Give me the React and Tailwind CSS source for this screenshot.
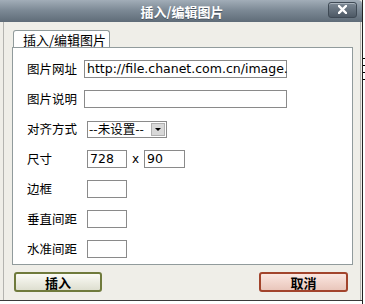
import React from "react";

const cjk = { fontFamily: '"Noto Sans CJK SC", "Noto Sans", sans-serif' };
const latin = { fontFamily: '"DejaVu Sans", "Noto Sans CJK SC", sans-serif' };

function Label({ children }) {
  return (
    <div className="w-[57px] text-[12.5px] leading-none text-black" style={cjk}>
      {children}
    </div>
  );
}

function Box({ className = "", children }) {
  return (
    <div
      className={`h-[18px] border border-[#8a8a8a] bg-white flex items-center px-[2px] text-[12.5px] text-black ${className}`}
      style={latin}
    >
      {children}
    </div>
  );
}

export default function App() {
  return (
    <div className="w-[365px] h-[304px] flex overflow-hidden bg-white">
      <div className="w-[362px] h-[301px] flex flex-col bg-[#efeee8] border-b border-[#3a3a3a]">
        {/* title bar */}
        <div className="h-[22px] grid grid-cols-[1fr_auto_1fr] items-center bg-gradient-to-b from-[#a2adb8] via-[#7a8793] to-[#5f6c78] rounded-tr-[4px]">
          <div />
          <div
            className="text-white font-bold text-[13px] leading-none pl-[2px] [text-shadow:0_1px_0_#4a5560]"
            style={cjk}
          >
            插入/编辑图片
          </div>
          <div className="flex justify-end pr-[5px]">
            <div className="w-[29px] h-[16px] mt-[-3px] rounded-[3px] border border-[#3f4a55] bg-gradient-to-b from-[#7d8995] to-[#4d5965] flex items-center justify-center shadow-[inset_0_1px_0_#aab4bd]">
              <svg width="9" height="9" viewBox="0 0 9 9">
                <path d="M1 1 L8 8 M8 1 L1 8" stroke="white" strokeWidth="2.4" strokeLinecap="square" />
              </svg>
            </div>
          </div>
        </div>
        {/* body */}
        <div className="flex-1 ml-[3px] mr-[1px] border-l border-r border-[#b4b4b0] flex flex-col">
          <div className="pl-[8px] pr-[8px] pt-[8px]">
            <div className="flex">
              <div
                className="w-[97px] h-[17px] ml-[1px] border border-b-0 border-[#919b9c] rounded-t-[3px] bg-white flex items-center pl-[9px] text-[13px] leading-none text-black"
                style={cjk}
              >
                插入/编辑图片
              </div>
            </div>
            <div className="w-[341px] h-[218px] border border-[#919b9c] bg-white pl-[14px] pt-[12px] flex flex-col">
              <div className="flex items-center h-[18px]">
                <Label>图片网址</Label>
                <Box className="w-[203px]">http://file.chanet.com.cn/image.</Box>
              </div>
              <div className="flex items-center h-[18px] mt-[12px]">
                <Label>图片说明</Label>
                <Box className="w-[203px]" />
              </div>
              <div className="flex items-center h-[18px] mt-[12px]">
                <Label>对齐方式</Label>
                <div className="ml-[3px] w-[80px] h-[17px] border border-[#8a8a8a] bg-white flex items-center">
                  <div className="flex-1 pl-[1px] text-[12.5px] leading-none text-black" style={cjk}>
                    --未设置--
                  </div>
                  <div className="w-[14px] h-[13px] mr-[1px] bg-[#d8d8d8] border border-[#b0b0b0] flex items-center justify-center">
                    <div className="w-0 h-0 border-l-[3px] border-r-[3px] border-t-[3px] border-l-transparent border-r-transparent border-t-black" />
                  </div>
                </div>
              </div>
              <div className="flex items-center h-[18px] mt-[12px]">
                <Label>尺寸</Label>
                <Box className="w-[40px] ml-[3px]">728</Box>
                <span className="w-[17px] text-center text-[12px] text-black" style={latin}>
                  x
                </span>
                <Box className="w-[41px]">90</Box>
              </div>
              <div className="flex items-center h-[18px] mt-[12px]">
                <Label>边框</Label>
                <Box className="w-[40px] ml-[3px]" />
              </div>
              <div className="flex items-center h-[18px] mt-[12px]">
                <Label>垂直间距</Label>
                <Box className="w-[40px] ml-[3px]" />
              </div>
              <div className="flex items-center h-[18px] mt-[12px]">
                <Label>水准间距</Label>
                <Box className="w-[40px] ml-[3px]" />
              </div>
            </div>
          </div>
          <div className="flex justify-between pl-[10px] pr-[12px] mt-[7px]">
            <div
              className="w-[88px] h-[20px] rounded-[3px] border-2 border-[#6f7a3c] bg-gradient-to-b from-[#fbfbf6] to-[#dedfd0] flex items-center justify-center text-[13px] font-bold leading-none text-black"
              style={cjk}
            >
              插入
            </div>
            <div
              className="w-[89px] h-[20px] rounded-[3px] border-2 border-[#a2442c] bg-gradient-to-b from-[#fbe7e1] to-[#e9c6bb] flex items-center justify-center text-[13px] font-bold leading-none text-black"
              style={cjk}
            >
              取消
            </div>
          </div>
        </div>
      </div>
      <div className="w-[3px] h-[304px] border-l border-[#222] bg-white flex flex-col">
        <div className="h-[58px]" />
        <div className="h-[1px] bg-black" />
        <div className="h-[6px]" />
        <div className="h-[1px] bg-black" />
        <div className="h-[6px]" />
        <div className="h-[1px] bg-black" />
        <div className="h-[6px]" />
        <div className="h-[1px] bg-black" />
      </div>
    </div>
  );
}
